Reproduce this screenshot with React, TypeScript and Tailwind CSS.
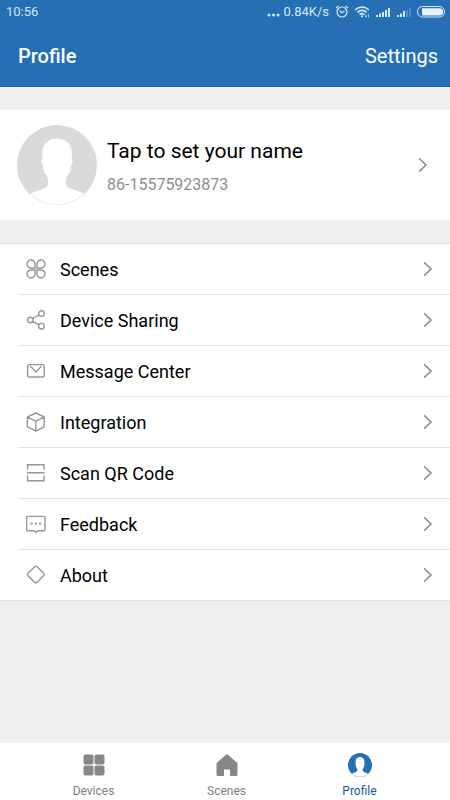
import React from "react";

const lineProps = {
  width: 20,
  height: 20,
  viewBox: "0 0 20 20",
  fill: "none",
  stroke: "currentColor",
  strokeWidth: 1.4,
  "aria-hidden": true,
} as const;

function ScenesIcon() {
  return (
    <svg {...lineProps}>
      <path d="M9 9H5.1A4 4 0 1 1 9 5.1ZM11 9V5.1A4 4 0 1 1 14.9 9ZM9 11V14.9A4 4 0 1 1 5.1 11ZM11 11H14.9A4 4 0 1 1 11 14.9Z" />
    </svg>
  );
}

function ShareIcon() {
  return (
    <svg {...lineProps}>
      <circle cx="4.3" cy="10" r="2.8" />
      <circle cx="15.4" cy="3.6" r="2.8" />
      <circle cx="15.4" cy="16.2" r="2.8" />
      <path d="M6.8 8.5 12.9 5M6.7 11.6 13 14.7" />
    </svg>
  );
}

function MailIcon() {
  return (
    <svg {...lineProps}>
      <rect x="1.6" y="3.6" width="16.6" height="12.4" rx="1.4" />
      <path d="m4.4 5.2 5.5 5.8 5.5-5.8" />
    </svg>
  );
}

function CubeIcon() {
  return (
    <svg {...lineProps} strokeLinejoin="round">
      <path d="M9.8 1 18.2 4.9V14.8L9.8 19.2 1.4 14.8V4.9ZM1.4 4.9 9.8 9.3 18.2 4.9M9.8 9.3V19.2" />
    </svg>
  );
}

function ScanIcon() {
  return (
    <svg {...lineProps}>
      <path d="M1.6 6.6V1.8H18V6.600M1.600 12.600V17.800H18V12.600M1 9.800H18.600" />
    </svg>
  );
}

function FeedbackIcon() {
  return (
    <svg {...lineProps}>
      <path d="M2 2.4H17.6Q19 2.4 19 3.8V15.4Q19 16.8 17.6 16.8H11.8L9.8 18.6 7.8 16.8H2Q.6 16.8.6 15.4V3.8Q.6 2.4 2 2.4Z" />
      <path d="M4.6 9.4h2M8.800 9.400h2M13 9.400h2" strokeWidth="2" />
    </svg>
  );
}

function DiamondIcon() {
  return (
    <svg {...lineProps}>
      <path d="M8.8 1.6Q9.8.7 10.8 1.6L17.8 8.600Q18.600 9.500 17.800 10.400L10.800 17.400Q9.800 18.300 8.800 17.400L1.800 10.400Q1 9.500 1.800 8.600Z" />
    </svg>
  );
}

function Chevron() {
  return (
    <svg
      width="10"
      height="16"
      viewBox="0 0 10 16"
      fill="none"
      stroke="#8c8c8c"
      strokeWidth="1.5"
      aria-hidden="true"
    >
      <path d="M1.2 1.400 8 8 1.200 14.600" />
    </svg>
  );
}

function Avatar({ size, color }: { size: number; color: string }) {
  return (
    <svg width={size} height={size} viewBox="0 0 80 80" className="shrink-0" aria-hidden="true">
      <circle cx="40" cy="40" r="40" fill={color} />
      <path
        fill="#fff"
        d="M40 13.5C47 13.5 54.5 18 54.8 27V34C56 34.5 55.6 39.5 53.8 40.5 53.6 44 53.6 47.5 51.6 49 49 52 48 56 49 60 51.5 65 60.5 64.5 66.8 69A39.4 39.4 0 0 1 13.2 69C19.5 64.5 28.5 65 30.8 60 31.8 56 30.8 52 28.4 49 26.4 47.5 26.4 44 26.2 40.5 24.4 39.5 24 34.5 25.2 34V27C25.5 18 33 13.5 40 13.5Z"
      />
    </svg>
  );
}

function StatusIcons() {
  return (
    <svg width="82" height="16" viewBox="0 0 82 16" fill="none" stroke="#d3ebf8" aria-hidden="true">
      <circle cx="7" cy="8" r="5" strokeWidth="1.2" />
      <path d="M4.6 6.6 7 8.8 9.6 7M1 4 3.4 2M13 4 10.6 2" strokeWidth="1.2" />
      <path d="M20 6Q27 0 34 6M22.4 8.400Q27 4.400 31.600 8.400M24.600 10.600Q27 8.600 29.400 10.600" strokeWidth="1.5" />
      <circle cx="27" cy="12.400" r="1.100" fill="#d3ebf8" stroke="none" />
      <path d="M31 13.400v-3m-1.400 1.600L31 13.400M33.400 10V13.400" strokeWidth=".8" />
      <path d="M42 13v-2M45 13v-3.500M48 13V8M51 13V6M54 13V4" strokeWidth="2" />
      <path d="M63 13v-2M66 13v-3.500M69 13V7" strokeWidth="2" />
      <path d="M72 13V6M75 13V4" strokeWidth="2" opacity=".25" />
    </svg>
  );
}

function Battery() {
  return (
    <svg width="28" height="12" viewBox="0 0 28 12" aria-hidden="true">
      <rect x=".5" y=".5" width="27" height="10.500" rx="5" fill="none" stroke="#d3ebf8" />
      <path d="M5 2.200H22.600A3.600 3.600 0 0 1 22.600 9.400H5Z" fill="#e6f1fa" />
    </svg>
  );
}

const items = [
  { label: "Scenes", Icon: ScenesIcon },
  { label: "Device Sharing", Icon: ShareIcon },
  { label: "Message Center", Icon: MailIcon },
  { label: "Integration", Icon: CubeIcon },
  { label: "Scan QR Code", Icon: ScanIcon },
  { label: "Feedback", Icon: FeedbackIcon },
  { label: "About", Icon: DiamondIcon },
];

export default function App() {
  return (
    <div className="flex min-h-screen flex-col bg-[#efefef] font-['Roboto',sans-serif] text-black">
      <header className="border-b border-[#1a5c9e] bg-[#266fb4] text-white">
        <div className="flex h-6 items-center justify-between pr-[5px] pl-1.5 text-[#d3ebf8]">
          <span className="text-[13px]">10:56</span>
          <div className="flex items-center">
            <svg width="16" height="16" viewBox="0 0 16 16" fill="currentColor" aria-hidden="true">
              <circle cx="2" cy="11" r="1.5" />
              <circle cx="6.5" cy="11" r="1.5" />
              <circle cx="11" cy="11" r="1.5" />
            </svg>
            <span className="mr-1.5 text-[13px]">0.84K/s</span>
            <StatusIcons />
            <Battery />
          </div>
        </div>
        <div className="flex h-[62px] items-center justify-between pt-0.5 pr-3 pl-[18px] text-[20px]">
          <h1 className="font-medium">Profile</h1>
          <button type="button">Settings</button>
        </div>
      </header>

      <main className="flex-1">
        <button type="button" className="mt-[23px] flex h-[110px] w-full items-center bg-white pr-[22px] pl-[17px] text-left">
          <Avatar size={80} color="#dadada" />
          <span className="ml-2.5 flex flex-1 flex-col gap-2 pt-1">
            <span className="text-[21px] leading-7">Tap to set your name</span>
            <span className="text-base leading-6 text-[#8e8e8e]">86-15575923873</span>
          </span>
          <Chevron />
        </button>

        <ul className="mt-[23px] border-y border-[#e0e0e0] bg-white pl-[18px]">
          {items.map(({ label, Icon }) => (
            <li key={label} className="border-b border-[#e4e4e4] last:border-b-0">
              <button type="button" className="flex h-[50px] w-full items-center pr-[17px] pl-2 text-left">
                <span className="text-[#969696]">
                  <Icon />
                </span>
                <span className="ml-3.5 flex-1 pt-0.5 text-lg">{label}</span>
                <Chevron />
              </button>
            </li>
          ))}
        </ul>
      </main>

      <nav className="grid h-[57px] grid-cols-3 bg-white pr-6 pl-[27px] text-xs text-[#7d7f82]">
        <a href="#devices" className="flex flex-col items-center gap-1.5 pt-2.5">
          <svg width="24" height="24" viewBox="0 0 24 24" fill="#85878a" aria-hidden="true">
            <rect x="1.5" y="1.500" width="10" height="10" rx="2" />
            <rect x="12.500" y="1.500" width="10" height="10" rx="2" />
            <rect x="1.500" y="12.500" width="10" height="10" rx="2" />
            <rect x="12.500" y="12.500" width="10" height="10" rx="2" />
          </svg>
          Devices
        </a>
        <a href="#scenes" className="flex flex-col items-center gap-1.5 pt-2.5">
          <svg width="24" height="24" viewBox="0 0 24 24" fill="#85878a" aria-hidden="true">
            <path d="M12 1 22.500 10V21.500Q22.500 23 21 23H15V16.500H9V23H3Q1.500 23 1.500 21.500V10Z" />
          </svg>
          Scenes
        </a>
        <a href="#profile" aria-current="page" className="flex flex-col items-center gap-1.5 pt-2.5 text-[#1a5c94]">
          <Avatar size={24} color="#266fb4" />
          Profile
        </a>
      </nav>
    </div>
  );
}
